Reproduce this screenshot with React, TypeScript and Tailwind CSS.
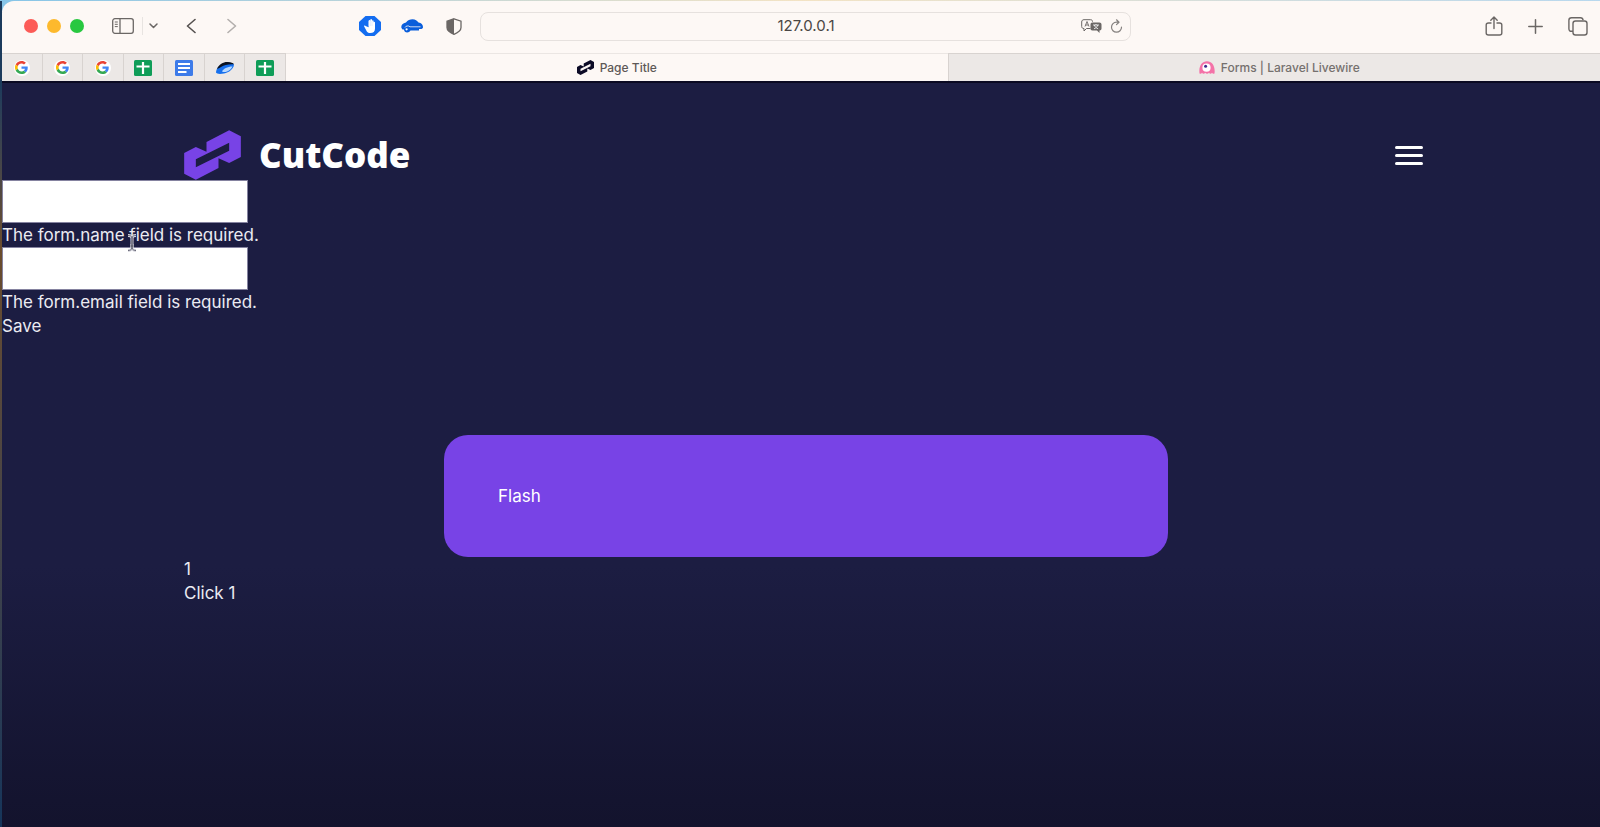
import { useState } from 'react'
import type { ReactNode } from 'react'

const LogoMark = ({ className }: { className?: string }) => (
  <svg viewBox="0 0 170 150" className={className} fill="currentColor" aria-hidden="true">
    <path
      fillRule="evenodd"
      d="M0 69 35 51 67 65V36L135 1 170 19V81L135 99 103 85V114L35 149 0 131ZM35 88V112L135 62V38Z"
    />
  </svg>
)

const GoogleIcon = () => (
  <span className="flex size-4 items-center justify-center rounded-full bg-white">
    <svg viewBox="0 0 48 48" className="size-[13px]" aria-hidden="true">
      <path fill="#ea4335" d="M24 9.500c3.500 0 6.700 1.200 9.200 3.600l6.900-6.900C35.900 2.400 30.500 0 24 0 14.600 0 6.500 5.400 2.600 13.200l8 6.200C12.400 13.700 17.700 9.500 24 9.500z" />
      <path fill="#4285f4" d="M47 24.500c0-1.600-.2-3.100-.4-4.500H24v9h12.900c-.6 3-2.300 5.500-4.800 7.200l7.700 6C44.400 38 47 31.800 47 24.500z" />
      <path fill="#fbbc05" d="M10.500 28.600a14.500 14.500 0 0 1 0-9.200l-8-6.200a24 24 0 0 0 0 21.600l8-6.200z" />
      <path fill="#34a853" d="M24 48c6.500 0 11.900-2.100 15.900-5.800l-7.700-6c-2.200 1.500-4.900 2.300-8.200 2.300-6.300 0-11.600-4.200-13.500-9.900l-8 6.200C6.500 42.600 14.600 48 24 48z" />
    </svg>
  </span>
)

const SheetsIcon = () => (
  <svg viewBox="0 0 18 16" className="h-4 w-[18px]" aria-hidden="true">
    <rect width="18" height="16" rx="1.500" fill="#0f9d58" />
    <path d="M2.500 6.500h13M9 2v12" stroke="#fff" strokeWidth="2.200" />
  </svg>
)

const DocsIcon = () => (
  <svg viewBox="0 0 18 16" className="h-4 w-[18px]" aria-hidden="true">
    <rect width="18" height="16" rx="1.500" fill="#3d7be9" />
    <path d="M3 4h12M3 8h12M3 12h8.500" stroke="#fff" strokeWidth="1.900" />
  </svg>
)

const SwooshIcon = () => (
  <svg viewBox="0 0 18 12" className="h-3 w-[18px]" aria-hidden="true">
    <path d="M0 10.500C0 6 5 1 11 .5c3 0 6 .8 7 2-.5 4.500-5 8-10 9C4 12.200.5 12 0 10.500z" fill="#1670ee" />
    <path d="M1 7C3 2 8-.3 12 .1c3 0 5 1 6 2.200C12 2 8 3 5.500 4.800 4 5.800 2.500 6.500 1 7z" fill="#0b1220" />
    <path d="M6 9.500c1-2.500 5.500-5 10.500-5C15 8 10 11.500 6 9.500z" fill="#b7d8ff" />
  </svg>
)

const LivewireIcon = () => (
  <svg viewBox="0 0 16 13" className="h-[13px] w-4" aria-hidden="true">
    <path d="M.5 12.500C-.5 5 3 .3 8 .3S16.500 5 15.500 12.500c-1 .7-2 .3-2.500-.8-.7 1.500-2.400 1.500-3 0-.8 1.500-3 1.500-3.800 0-.7 1.500-2.500 1.500-3.200 0-.5 1.100-1.500 1.500-2.500.8z" fill="#f472a8" />
    <circle cx="7.500" cy="6.700" r="4.100" fill="#fff" />
    <circle cx="6.600" cy="5.300" r="1.500" fill="#3b2c8c" />
  </svg>
)

const pinnedTabs: { label: string; icon: ReactNode }[] = [
  { label: 'Google', icon: <GoogleIcon /> },
  { label: 'Google', icon: <GoogleIcon /> },
  { label: 'Google', icon: <GoogleIcon /> },
  { label: 'Sheets', icon: <SheetsIcon /> },
  { label: 'Docs', icon: <DocsIcon /> },
  { label: 'Board', icon: <SwooshIcon /> },
  { label: 'Sheets', icon: <SheetsIcon /> },
]

const Toolbar = () => (
  <div className="flex h-[52px] items-center px-[22px] pb-0.5 text-[#6b6765]">
    <div className="flex shrink-0 items-center gap-[9px]">
      <button aria-label="Close" className="size-[14px] rounded-full bg-[#fc5b57]" />
      <button aria-label="Minimize" className="size-[14px] rounded-full bg-[#fdb92d]" />
      <button aria-label="Zoom" className="size-[14px] rounded-full bg-[#28c840]" />
    </div>

    <div className="ml-7 flex shrink-0 items-center">
      <button aria-label="Sidebar">
        <svg viewBox="0 0 22 16" className="h-4 w-[22px]" fill="none" stroke="currentColor" strokeWidth="1.300">
          <rect x=".7" y=".7" width="20.600" height="14.600" rx="2.200" />
          <path d="M8 1v14" />
          <path d="M2.800 4h3M2.800 6.300h3M2.800 8.600h3" strokeWidth="1" />
        </svg>
      </button>
      <span className="ml-2 h-[18px] w-px bg-[#e8e4e1]" />
      <button aria-label="Tab groups" className="ml-1.5">
        <svg viewBox="0 0 9 6" className="h-1.5 w-[9px]" fill="none" stroke="currentColor" strokeWidth="1.500" strokeLinecap="round" strokeLinejoin="round">
          <path d="m1 1 3.500 3.500L8 1" />
        </svg>
      </button>
      <button aria-label="Back" className="ml-7">
        <svg viewBox="0 0 10 16" className="h-4 w-2.5" fill="none" stroke="#55514f" strokeWidth="1.600" strokeLinecap="round" strokeLinejoin="round">
          <path d="M9 1.500 1.500 8 9 14.500" />
        </svg>
      </button>
      <button aria-label="Forward" className="ml-[31px]">
        <svg viewBox="0 0 10 16" className="h-4 w-2.5" fill="none" stroke="#b3afad" strokeWidth="1.600" strokeLinecap="round" strokeLinejoin="round">
          <path d="M1 1.500 8.500 8 1 14.500" />
        </svg>
      </button>
    </div>

    <div className="ml-[122px] flex shrink-0 items-center">
      <button aria-label="AdBlock">
        <svg viewBox="0 0 22 20" className="h-5 w-[22px]">
          <path d="M6.500 0h9L22 6v8l-6.500 6h-9L0 14V6z" fill="#146df0" />
          <path d="M6.500 10c-.8-1-1.800-.4-1.300.6l2.500 4.600c.7 1.200 1.600 1.800 3.500 1.800 3.200 0 4.800-1.500 4.800-4.500V6.500c0-1-1.400-1-1.400 0V5c0-1.100-1.600-1.100-1.600 0V4c0-1.200-1.700-1.200-1.700 0v1c0-1.200-1.700-1.200-1.700 0v6.300z" fill="#fff" />
          <path d="M9.500 5v5M11.300 4v6M13 5v5" stroke="#b9d2fa" strokeWidth=".4" />
        </svg>
      </button>
      <button aria-label="Passwords" className="ml-5">
        <svg viewBox="0 0 22 14" className="h-[14px] w-[22px]">
          <path d="M.5 9C-.2 7 1 4.500 5 3.500 6.500 1 9 .3 11.500.3c3 0 4.500 1.500 6 3.200 3 .3 4.300 2 4.500 4.500 0 1.600-1 2-2.500 2H18v1.500H9.500c-1.500 3-6.500 2.500-6.500-1H1.500z" fill="#0a5edb" />
          <path d="M4 8.500c.5-1.500 3.500-2.300 5-.7h10.500" fill="none" stroke="#fdf8f5" strokeWidth=".8" />
          <circle cx="5.600" cy="10.300" r="1.100" fill="#fff" />
        </svg>
      </button>
      <button aria-label="Privacy report" className="ml-[23px]">
        <svg viewBox="0 0 16 17" className="h-[17px] w-4">
          <path d="M8 .8 15 3.200v6.300c0 3.200-3 5.200-7 6.800-4-1.600-7-3.600-7-6.800V3.200z" fill="none" stroke="currentColor" strokeWidth="1.300" />
          <path d="M8 .8v15.500c-4-1.600-7-3.600-7-6.800V3.200z" fill="currentColor" />
        </svg>
      </button>
    </div>

    <div className="ml-[18px] flex h-[29px] w-[651px] items-center rounded-lg border border-[#e6e1de] pr-[7px] pl-[50px]">
      <input
        aria-label="Address"
        defaultValue="127.0.0.1"
        className="min-w-0 flex-1 bg-transparent text-center text-[15px] text-[#4a4644] outline-none"
      />
      <button aria-label="Translate">
        <svg viewBox="0 0 21 14" className="h-[14px] w-[21px]" fill="none" stroke="currentColor">
          <path d="M9.500 9.500H5.500L3 12V9.500c-1.500 0-2.300-.7-2.300-2V3C.7 1.500 1.500.7 3 .7h6.500c1.500 0 2 .8 2 2" />
          <path d="M4 7.500 6 2.500l2 5M4.700 6h2.600" strokeWidth=".9" />
          <path d="M11.500 3.500h6.800c1.500 0 2.200.7 2.200 2v4c0 1.300-.7 2-2 2V14L16 11.500h-4.500c-1.400 0-2-.7-2-2v-4c0-1.300.6-2 2-2z" fill="currentColor" stroke="none" />
          <path d="M12 6h6M15 5v1M13 9.800c2-.8 3.300-2 3.800-3.800M13.300 6c.6 1.800 1.900 3 3.800 3.800" stroke="#fff" strokeWidth=".8" />
        </svg>
      </button>
      <button aria-label="Reload" className="ml-2">
        <svg viewBox="0 0 13 14" className="h-[14px] w-[13px]" fill="none" stroke="#85817f" strokeWidth="1.200" strokeLinecap="round" strokeLinejoin="round">
          <path d="M8.800 3.200H6.500a5 5 0 1 0 5 5M6.500.8l2.500 2.400-2.500 2.400" />
        </svg>
      </button>
    </div>

    <div className="ml-auto flex shrink-0 items-center gap-[25px]">
      <button aria-label="Share">
        <svg viewBox="0 0 18 20" className="h-5 w-[18px]" fill="none" stroke="currentColor" strokeWidth="1.400" strokeLinecap="round" strokeLinejoin="round">
          <path d="M6 7H3.500C2 7 1.200 7.700 1.200 9v8c0 1.300.8 2 2.300 2h11c1.500 0 2.300-.7 2.300-2V9c0-1.300-.8-2-2.300-2H12M9 12.500V1.200M5.800 4.200 9 1l3.200 3.200" />
        </svg>
      </button>
      <button aria-label="New tab">
        <svg viewBox="0 0 15 15" className="size-[15px]" fill="none" stroke="currentColor" strokeWidth="1.500" strokeLinecap="round">
          <path d="M7.500 .8v13.400M.8 7.500h13.400" />
        </svg>
      </button>
      <button aria-label="Show all tabs">
        <svg viewBox="0 0 20 19" className="h-[19px] w-5" fill="none" stroke="currentColor" strokeWidth="1.400">
          <path d="M5 14.300H3.500C1.800 14.300.9 13.400.9 11.800V3.300C.9 1.700 1.800.8 3.500.8h9c1.600 0 2.400.8 2.600 2.400" />
          <rect x="5" y="4" width="14" height="14" rx="2.500" />
        </svg>
      </button>
    </div>
  </div>
)

const TabBar = () => (
  <nav className="flex h-[30px] border-b-2 border-b-[#0b0a22] text-xs font-medium">
    <div className="grid w-[284px] shrink-0 grid-cols-7">
      {pinnedTabs.map((tab, i) => (
        <button
          key={i}
          aria-label={tab.label}
          className="flex items-center justify-center border-t border-r border-[#d8d3d0] bg-[#ece8e6]"
        >
          {tab.icon}
        </button>
      ))}
    </div>
    <button className="flex flex-1 items-center justify-center gap-1.5 border-t border-[#ebe6e3] text-[#5d5957]">
      <LogoMark className="h-[15px] w-[17px] text-[#0c0b26]" />
      Page Title
    </button>
    <button className="flex flex-1 items-center justify-center gap-1.5 border-t border-l border-[#d8d3d0] bg-[#ece8e6] text-[#75706e]">
      <LivewireIcon />
      Forms | Laravel Livewire
    </button>
  </nav>
)

const App = () => {
  const [form, setForm] = useState({ name: '', email: '' })
  const [count, setCount] = useState(1)

  return (
    <div className="flex min-h-screen overflow-hidden bg-[#101a3a] bg-linear-to-r from-[#86c5e8] via-[#f3e3c4] to-[#b8d8ee] bg-[length:100%_12px] bg-no-repeat pt-px font-['Inter',sans-serif]">
      <div className="w-0.5 shrink-0 bg-linear-to-b from-[#1c3b5c] from-10% via-[#6b4c2c] via-30% to-[#15355a]" />

      {/* the window runs slightly past the right edge of the screen */}
      <div className="-mr-2.5 flex min-w-0 flex-1 flex-col">
        <div className="rounded-tl-xl bg-[#fdf8f5]">
          <Toolbar />
          <TabBar />
        </div>

        <main className="relative flex-1 bg-linear-to-b from-[#1c1d42] from-65% to-[#13132d] text-[17px] leading-6 text-[#ebebf2]">
          <header className="flex items-center justify-between pt-[47px] pr-[187px] pl-[182px]">
            <a href="#" className="flex items-center gap-[18px] text-white">
              <LogoMark className="h-[50px] w-[57px] text-[#7843e6]" />
              <span className="font-['Open_Sans',sans-serif] text-[35px] leading-[50px] font-extrabold">CutCode</span>
            </a>
            <button aria-label="Menu" className="flex w-7 flex-col gap-[5px]">
              <span className="h-[3px] rounded-full bg-white" />
              <span className="h-[3px] rounded-full bg-white" />
              <span className="h-[3px] rounded-full bg-white" />
            </button>
          </header>

          <form onSubmit={(e) => e.preventDefault()} className="flex flex-col items-start">
            <input
              aria-label="Name"
              value={form.name}
              onChange={(e) => setForm({ ...form, name: e.target.value })}
              className="h-[43px] w-[246px] border border-[#8583a0] bg-white px-3 text-black"
            />
            <p>The form.name field is required.</p>
            <input
              aria-label="Email"
              type="email"
              value={form.email}
              onChange={(e) => setForm({ ...form, email: e.target.value })}
              className="h-[43px] w-[246px] border border-[#8583a0] bg-white px-3 text-black"
            />
            <p>The form.email field is required.</p>
            <button type="submit">Save</button>
          </form>

          <div className="mx-auto mt-[97px] w-[724px] max-w-full rounded-3xl bg-[#7843e6] px-[54px] py-[49px] text-white">
            Flash
          </div>

          <div className="flex flex-col items-start pl-[182px]">
            <span>{count}</span>
            <button onClick={() => setCount(count + 1)}>Click {count}</button>
          </div>

          {/* text cursor */}
          <svg viewBox="0 0 10 18" className="absolute top-[151px] left-[125px] h-[18px] w-2.5" fill="none" aria-hidden="true">
            <path d="M1 1.500c2 0 4 .5 4 2.500v10c0 1.500-2 2.500-4 2.500M9 1.500c-2 0-4 .5-4 2.500v10c0 1.500 2 2.500 4 2.500M3 12h4" stroke="#d8d8e0" strokeWidth="3" />
            <path d="M1 1.500c2 0 4 .5 4 2.500v10c0 1.500-2 2.500-4 2.500M9 1.500c-2 0-4 .5-4 2.500v10c0 1.500 2 2.500 4 2.500M3 12h4" stroke="#4a4a5c" strokeWidth=".8" />
          </svg>
        </main>
      </div>
    </div>
  )
}

export default App
